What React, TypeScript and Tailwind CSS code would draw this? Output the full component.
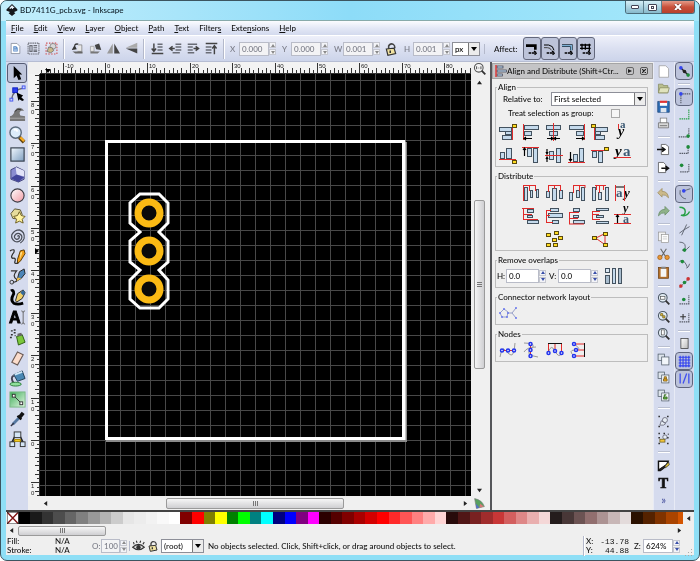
import React from "react";
import type { ReactNode } from "react";

/* ---------- shared pieces ---------- */

function Svg({ children, size = "size-[18px]" }: { children?: ReactNode; size?: string }) {
  return (
    <svg viewBox="0 0 18 18" className={`${size} shrink-0 overflow-visible`} fill="none" aria-hidden="true">
      {children}
    </svg>
  );
}

function Spin({ muted = false }: { muted?: boolean }) {
  const c = muted ? "#8a8a8a" : "#3a4fa8";
  return (
    <span className="flex w-[7px] shrink-0 flex-col gap-px" aria-hidden="true">
      <span className="flex h-[6px] items-center justify-center border border-[#c6c8d0] bg-[#f3f4f8]">
        <svg viewBox="0 0 4 3" className="h-[3px] w-1"><path d="M0 3L2 0L4 3Z" fill={c} /></svg>
      </span>
      <span className="flex h-[6px] items-center justify-center border border-[#c6c8d0] bg-[#f3f4f8]">
        <svg viewBox="0 0 4 3" className="h-[3px] w-1"><path d="M0 0L2 3L4 0Z" fill={c} /></svg>
      </span>
    </span>
  );
}

function Field({ label, value, muted = false, width }: { label: string; value: string; muted?: boolean; width: string }) {
  return (
    <label className={`flex shrink-0 items-center ${muted ? "text-[#7b7d88]" : "text-[#111]"}`}>
      <span className="w-[9px]">{label}</span>
      <input
        type="text"
        defaultValue={value}
        disabled={muted}
        className={`h-[14px] ${width} min-w-0 border border-[#b9bcc8] pl-[2px] ${muted ? "bg-[#f3f3f5]" : "bg-white"}`}
      />
      <Spin muted={muted} />
    </label>
  );
}

function Combo({ label, value, width }: { label: string; value: string; width: string }) {
  return (
    <span className={`flex h-[14px] ${width} shrink-0 border border-[#8d8f98] bg-white`}>
      <select aria-label={label} className="min-w-0 flex-1 appearance-none bg-white px-[2px]">
        <option>{value}</option>
      </select>
      <span className="flex w-[11px] items-center justify-center border-l border-[#777] bg-[#ececec]" aria-hidden="true">
        <svg viewBox="0 0 6 4" className="h-1 w-[6px]"><path d="M0 0H6L3 4Z" fill="#000" /></svg>
      </span>
    </span>
  );
}

function VSep() {
  return <span className="h-[20px] w-[2px] shrink-0 border-l border-[#b4b9cb] bg-white" />;
}

/* ---------- title and menu ---------- */

function TitleBar() {
  return (
    <header className="flex h-[20px] shrink-0 items-start bg-linear-to-r from-[#c3eefc] via-[#8ddcf8] to-[#a5e8fb] pl-[5px]">
      <svg viewBox="0 0 18 18" className="mt-[3px] size-[12px]" aria-hidden="true">
        <path d="M9 0L17 8Q18 10 15 11L12 12L14 14L9 18L4 14L6 12L1 10Q0 9 1 8Z" fill="#16181c" />
        <path d="M9 2L13 6L11 6L10 8L8 6L6 8L5 6Z" fill="#e8f2fa" />
      </svg>
      <h1 className="ml-[2px] pt-[3px] leading-[12px] text-[#10202a]">BD7411G_pcb.svg - Inkscape</h1>
      <div className="mr-[4px] ml-auto flex h-[13px] overflow-hidden rounded-b-[3px] border border-t-0 border-[#4b6c7a]">
        <button aria-label="Minimize" className="flex w-[18px] items-center justify-center border-r border-[#5e7f8d] bg-linear-to-b from-[#d5eef6] to-[#86b9cc]">
          <span className="h-[4px] w-[8px] rounded-[1px] border border-[#445] bg-white" />
        </button>
        <button aria-label="Maximize" className="flex w-[18px] items-center justify-center border-r border-[#5e7f8d] bg-linear-to-b from-[#d5eef6] to-[#86b9cc]">
          <span className="flex h-[7px] w-[9px] items-center justify-center rounded-[1px] border border-[#445] bg-white">
            <span className="h-[3px] w-[3px] border border-[#445]" />
          </span>
        </button>
        <button aria-label="Close" className="flex w-[32px] items-center justify-center bg-linear-to-b from-[#e49a88] via-[#c8503a] to-[#b8402c]">
          <svg viewBox="0 0 8 6" className="h-[6px] w-[8px]">
            <path d="M1 0L7 6M7 0L1 6" stroke="#5a2a22" strokeWidth="3" />
            <path d="M1 0L7 6M7 0L1 6" stroke="#fff" strokeWidth="2" />
          </svg>
        </button>
      </div>
    </header>
  );
}

const MENUS: [string, string, string][] = [
  ["", "F", "ile"], ["", "E", "dit"], ["", "V", "iew"], ["", "L", "ayer"], ["", "O", "bject"],
  ["", "P", "ath"], ["", "T", "ext"], ["Filter", "s", ""], ["Exte", "n", "sions"], ["", "H", "elp"],
];

function MenuBar() {
  return (
    <nav className="flex h-[15px] shrink-0 items-center gap-[10px] border-t border-[#8aa] bg-linear-to-b from-[#fbfcff] via-[#e4e8f6] to-[#d3daee] pl-[5px]">
      {MENUS.map(([a, u, b]) => (
        <button key={a + u + b} className="leading-[12px] text-[#111]">
          {a}<span className="underline">{u}</span>{b}
        </button>
      ))}
    </nav>
  );
}

/* ---------- tool controls ---------- */

const G = "#6a6d76";
const CONTROLS: Record<string, ReactNode> = {
  "Select all in layers": <><path d="M3 2H11L15 6V16H3Z" fill="#fff" stroke="#7b8290" /><path d="M6 6H10L12 8V13H6Z" fill="#4c82c4" /><path d="M7 8H10M7 10H11M7 12H11" stroke="#dce8f6" /></>,
  "Select all": <><rect x="1.500" y="1.500" width="15" height="15" stroke={G} strokeWidth="1.500" strokeDasharray="2 1" /><path d="M4 5H7V13H4ZM9 5H14M9 8H14M9 11H14M9 13H14" stroke={G} strokeWidth="1.500" /></>,
  "Deselect": <><rect x="1.500" y="1.500" width="15" height="15" stroke="#d05050" strokeWidth="1.500" strokeDasharray="2 2" /><circle cx="11" cy="6" r="4" fill="#d8d8d8" stroke="#777" /><path d="M3 13L5 7L10 8L12 12L8 15Z" fill="#c9b98a" stroke="#666" /></>,
  "Rotate left": <><path d="M10 4H15V13H9" stroke="#777" fill="#e8e8e8" /><path d="M1 11L5 4L8 10Z" fill="#333" /><path d="M2 13H16V16H6Z" fill="#666" /><path d="M10 3Q6 2 5 5" stroke="#333" strokeWidth="2" /></>,
  "Rotate right": <><path d="M2 6H7V13H2Z" stroke="#999" fill="#e8e8e8" /><path d="M8 4L14 2L17 11L10 10Z" fill="#444" /><path d="M2 13H15L12 16H2Z" fill="#777" /></>,
  "Flip horizontal": <><path d="M8 2V16H0Z" fill="#999" /><path d="M10 2V16H18Z" fill="#444" /></>,
  "Flip vertical": <><path d="M17 1V8H1Z" fill="#aaa" /><path d="M17 16V9H1Z" fill="#444" /></>,
  "Lower to bottom": <><path d="M4 2V12M1 9L4 13L7 9" stroke="#444" strokeWidth="2" /><path d="M9 3H16M9 7H16M9 11H16" stroke={G} strokeWidth="2" /><path d="M1 16H17" stroke="#444" strokeWidth="2" /></>,
  "Lower": <><path d="M1 9H8M5 6L1 9L5 12" stroke="#444" strokeWidth="2" /><path d="M9 3H17M9 7H17M9 11H17M5 15H15" stroke={G} strokeWidth="2" /></>,
  "Raise": <><path d="M1 3H14M1 7H8M1 11H8M1 15H10" stroke={G} strokeWidth="2" /><path d="M9 9H16M12 6L16 9L12 12" stroke="#444" strokeWidth="2" /></>,
  "Raise to top": <><path d="M1 2H17" stroke="#444" strokeWidth="2" /><path d="M1 7H9M1 11H9M1 15H9" stroke={G} strokeWidth="2" /><path d="M13 17V6M10 9L13 5L16 9" stroke="#444" strokeWidth="2" /></>,
};

function Controls({ names }: { names: string[] }) {
  return (
    <div className="flex">
      {names.map((n) => (
        <button key={n} aria-label={n} className="flex h-[20px] w-[18px] items-center justify-center">
          <Svg size="size-[13px]">{CONTROLS[n]}</Svg>
        </button>
      ))}
    </div>
  );
}

function Padlock({ size = "size-[14px]" }: { size?: string }) {
  return (
    <Svg size={size}>
      <path d="M6 9V5Q8 1 12 3Q14 4 14 8" stroke="#444" strokeWidth="2" />
      <path d="M3 9L13 8L15 15L5 17Z" fill="#f0e2a0" stroke="#333" strokeWidth="1.500" />
      <path d="M8 11V14" stroke="#333" strokeWidth="2" />
    </Svg>
  );
}

const AFFECT: [string, ReactNode][] = [
  ["Scale stroke width", <path key="a" d="M0 4H14V10" stroke="#000" strokeWidth="4" />],
  ["Scale rounded corners", <g key="b"><path d="M0 3H7Q14 4 15 11" stroke="#000" strokeWidth="1.500" /><path d="M0 7H5Q10 7 11 11" stroke="#444" strokeWidth="1.500" /></g>],
  ["Move gradients", <g key="c"><path d="M0 4H14V11" stroke="#1c2c3a" strokeWidth="4" /><path d="M0 4H14V11" stroke="#7db0d4" strokeWidth="2" /></g>],
  ["Move patterns", <path key="d" d="M0 3H16M0 8H16M3 1V10M8 1V10M14 1V12" stroke="#000" strokeWidth="2" />],
];

function ToolControls() {
  return (
    <div className="flex h-[27px] shrink-0 items-center overflow-hidden border-y border-t-white border-b-[#b6bdd3] bg-linear-to-b from-[#eef0fa] via-[#dbe0f1] to-[#ccd4ea]">
      <Controls names={["Select all in layers", "Select all", "Deselect"]} />
      <span className="flex w-[8px] justify-center"><VSep /></span>
      <Controls names={["Rotate left", "Rotate right", "Flip horizontal", "Flip vertical"]} />
      <span className="flex w-[8px] justify-center"><VSep /></span>
      <Controls names={["Lower to bottom", "Lower", "Raise", "Raise to top"]} />
      <span className="mr-[2px] flex w-[8px] justify-center"><VSep /></span>
      <div className="flex gap-[6px]">
        <Field label="X" value="0.000" muted width="w-[30px]" />
        <Field label="Y" value="0.000" muted width="w-[30px]" />
        <Field label="W" value="0.001" muted width="w-[30px]" />
      </div>
      <button aria-label="Lock ratio" className="mr-[6px] ml-[4px]"><Padlock /></button>
      <Field label="H" value="0.001" muted width="w-[30px]" />
      <span className="w-[2px]" />
      <Combo label="Unit" value="px" width="w-[28px]" />
      <span className="mr-[9px] ml-[4px]"><VSep /></span>
      <span className="w-[29px] text-[#111]">Affect:</span>
      {AFFECT.map(([n, art]) => (
        <button key={n} aria-label={n} aria-pressed="true" className="flex h-[23px] w-[18px] items-center justify-center rounded-[3px] border border-[#63687c] bg-[#bcc3d9]">
          <Svg size="size-[12px]">{art}<path d="M4 15H14M12 12L16 15L12 18" stroke="#000" strokeWidth="2" strokeDasharray="4 1" /></Svg>
        </button>
      ))}
    </div>
  );
}

/* ---------- toolbox ---------- */

const TOOLS: [string, ReactNode][] = [
  ["Select", <path key="i" d="M5 1V14L8 11L10 16L13 15L11 10H14Z" fill="#000" />],
  ["Edit nodes", <g key="i"><path d="M3 16Q3 5 16 3" stroke="#667" strokeWidth="1.500" /><rect x="4" y="3" width="5" height="5" fill="#2a3cf0" stroke="#1020c0" /><rect x="14" y="1" width="3" height="3" fill="#cdd4ff" stroke="#4455ee" /><rect x="1" y="14" width="3" height="3" fill="#cdd4ff" stroke="#4455ee" /><path d="M8 8L15 11L13 13L16 16L14 17L11 15L10 17Z" fill="#000" /></g>],
  ["Tweak", <g key="i"><path d="M1 12Q5 11 6 6Q9 1 14 4L16 6L13 6Q10 7 12 11L17 12V17H1Z" fill="#777" /><path d="M1 14H17" stroke="#aaa" /><path d="M6 7Q9 3 13 5" stroke="#333" /></g>],
  ["Zoom", <g key="i"><circle cx="7" cy="7" r="6" fill="#dcecfa" stroke="#5b6b7b" strokeWidth="1.500" /><path d="M5 4Q8 3 9 6" stroke="#fff" strokeWidth="2" /><path d="M11 12L16 17" stroke="#5a4010" strokeWidth="4" /><path d="M12 12L16 16" stroke="#f2a822" strokeWidth="2.500" /></g>],
  ["Rectangle", <rect key="i" x="2" y="2" width="14" height="14" fill="url(#steel)" stroke="#333d4a" strokeWidth="1.200" />],
  ["3D box", <g key="i"><path d="M2 4L8 1L16 5V14L10 17L2 14Z" fill="#8a8cd0" stroke="#44467c" /><path d="M7 1L16 5V11L8 9Z" fill="#e2e3f8" /><path d="M2 13L8 9L16 12L10 17Z" fill="#42449a" /></g>],
  ["Ellipse", <circle key="i" cx="9" cy="9" r="7" fill="url(#rose)" stroke="#3c3c44" strokeWidth="1.200" />],
  ["Star", <g key="i"><path d="M2 7L6 2L12 3L14 8L10 13L4 12Z" fill="#e6dc9c" stroke="#5a5434" /><path d="M11 5L13 9L17 10L14 13L15 17L11 15L7 17L8 13L5 10L9 9Z" fill="#fff2a0" stroke="#6a5c20" /></g>],
  ["Spiral", <path key="i" d="M9 9Q10 7 11 9Q11 12 8 12Q5 11 6 8Q8 5 11 6Q15 8 13 12Q10 16 6 14Q2 11 3 7Q6 2 11 2Q17 4 16 11Q15 14 12 16" stroke="#4a4e58" strokeWidth="1.300" />],
  ["Pencil", <g key="i"><path d="M1 3Q7 0 5 5Q1 10 4 11Q8 10 6 15Q6 17 10 16" stroke="#333" strokeWidth="1.300" /><path d="M9 12L12 3L16 2L17 6L12 14L9 16Z" fill="#f2a018" stroke="#553805" /><path d="M12 5L14 4L12 12" fill="#ffe9a0" /></g>],
  ["Bezier", <g key="i"><path d="M2 3H8Q3 9 8 12Q9 15 4 15" stroke="#333" strokeWidth="1.300" /><circle cx="3" cy="15" r="2" stroke="#333" /><path d="M9 11L11 4L16 1L17 6L13 11L8 14Z" fill="#4d86b8" stroke="#222" /><path d="M9 10L13 11L8 14Z" fill="#f2c04a" /></g>],
  ["Calligraphy", <g key="i"><path d="M2 2Q5 0 5 5Q1 12 5 15Q9 17 15 15" stroke="#000" strokeWidth="3" /><path d="M7 12L9 5L15 1L17 4L14 10L8 14Z" fill="#f2d06a" stroke="#222" /><path d="M12 4L15 1L17 4L15 7Z" fill="#356a9c" /></g>],
  ["Text", <g key="i"><text x="0" y="15" fontSize="17" fontWeight="900" fontFamily="'Liberation Sans', sans-serif" fill="#000" stroke="#000">A</text><path d="M13 2Q15 2 15 4V14Q15 16 13 16M17 2Q15 2 15 4M17 16Q15 16 15 14" stroke="#666" /></g>],
  ["Spray", <g key="i"><path d="M8 8L14 6L17 14L10 17Z" fill="#7cc83c" stroke="#2c5c10" /><path d="M9 5L13 4L14 7L9 8Z" fill="#666" /><path d="M2 2H4M5 4H7M2 6H4M5 1H7M6 7H7M1 9H3" stroke="#333" strokeWidth="1.500" /></g>],
  ["Eraser", <path key="i" d="M9 2L15 5L9 16L3 13Z" fill="#fbdccb" stroke="#6a5a54" strokeWidth="1.200" />],
  ["Paint bucket", <g key="i"><path d="M5 5L14 1L17 9L9 12Z" fill="#4a88b4" stroke="#1f3a50" /><path d="M6 5L14 2" stroke="#cfe6f6" strokeWidth="2" /><path d="M5 6Q1 8 5 14" stroke="#445" strokeWidth="2" /><ellipse cx="7" cy="15" rx="6" ry="2" fill="#8fe09a" stroke="#2b7a3a" /></g>],
  ["Gradient", <g key="i"><rect x="1" y="1" width="16" height="16" fill="url(#leaf)" stroke="#79b885" /><path d="M5 5L13 13" stroke="#333" /><rect x="3.500" y="3.500" width="3" height="3" fill="#fff" stroke="#333" /><rect x="11.500" y="11.500" width="3" height="3" fill="#fff" stroke="#333" /></g>],
  ["Dropper", <g key="i"><path d="M4 14L11 7" stroke="#5577a0" strokeWidth="3" /><path d="M2 16L5 13" stroke="#334" strokeWidth="1.500" /><path d="M9 5L13 9" stroke="#111" strokeWidth="2.500" /><path d="M11 7L15 2" stroke="#111" strokeWidth="4" /></g>],
  ["Connector", <g key="i"><path d="M6 6L3 12M12 6L15 12M6 10L4 13M12 10L14 13" stroke="#222" strokeWidth="1.500" /><rect x="5.500" y="1" width="7" height="6" fill="#d5e6f6" stroke="#333" /><rect x="1" y="11.500" width="5" height="5" fill="#d5e6f6" stroke="#333" /><rect x="12" y="11.500" width="5" height="5" fill="#d5e6f6" stroke="#333" /><rect x="6" y="9" width="6" height="2" fill="#ffd428" stroke="#a80" /></g>],
];

function Toolbox() {
  return (
    <aside aria-label="Toolbox" className="w-[22px] shrink-0 bg-[#d5dbee] pt-px">
      <div className="flex h-[387px] flex-col items-center justify-between">
        {TOOLS.map(([n, art]) => (
          <button
            key={n}
            aria-label={n}
            className={`flex h-[20px] w-[20px] shrink-0 items-center justify-center ${n === "Select" ? "rounded-[3px] border border-[#565c74] bg-[#bfc6dc]" : ""}`}
          >
            <Svg size="size-[17px]">{art}</Svg>
          </button>
        ))}
      </div>
    </aside>
  );
}

/* ---------- canvas ---------- */

const STEP = 42.4;
const RULER_FONT = "'Liberation Sans', sans-serif";

function TopRuler() {
  const ticks = Array.from({ length: 102 }, (_, i) => i - 15);
  return (
    <svg className="h-[12px] w-full min-w-0 bg-[#f3f3f3]" role="img" aria-label="Horizontal ruler">
      <rect x="0" y="11" width="100%" height="1" fill="#333" />
      {ticks.map((t) => {
        const x = Math.round(65 + (t * STEP) / 10);
        const major = t % 10 === 0;
        return <rect key={t} x={x} y={major ? 1 : t % 2 === 0 ? 6 : 8} width="1" height={major ? 11 : 6} fill="#333" />;
      })}
      {Array.from({ length: 10 }, (_, i) => i - 1).map((n) => (
        <text key={n} x={Math.round(65 + n * STEP) + 2} y="6" fontSize="6" fontFamily={RULER_FONT} fill="#222">{n * 10}</text>
      ))}
      <path d="M5 7H11L8 11Z" fill="#000" />
    </svg>
  );
}

function SideRuler() {
  const ticks = Array.from({ length: 101 }, (_, i) => i - 13);
  return (
    <svg className="h-full w-[12px] bg-[#f3f3f3]" role="img" aria-label="Vertical ruler">
      <rect x="11" y="0" width="1" height="100%" fill="#333" />
      {ticks.map((t) => {
        const y = Math.round(366 - (t * STEP) / 10);
        const major = t % 10 === 0;
        return <rect key={t} x={major ? 3 : t % 2 === 0 ? 7 : 9} y={y} width={major ? 9 : 5} height="1" fill="#333" />;
      })}
      {Array.from({ length: 10 }, (_, i) => i - 1).map((n) => {
        const y = Math.round(366 - n * STEP);
        const s = String(Math.abs(n * 10));
        return s.split("").map((ch, i) => (
          <text key={`${n}-${i}`} x="3" y={y + 6 + i * 7} fontSize="6" fontFamily={RULER_FONT} fill="#222">{ch}</text>
        ));
      })}
      <path d="M7 174L11 177L7 180Z" fill="#000" />
    </svg>
  );
}

const OUTLINE =
  "M140 194H159L168 203V223L159 232L168 241V262L159 270L168 280V299L159 308H140L130 299V280L140 270L130 262V241L140 232L130 223V203Z";

function Drawing() {
  return (
    <div className="relative min-h-0 min-w-0 overflow-hidden bg-black">
      <svg className="absolute inset-0 h-full w-full" role="img" aria-label="Circuit board drawing">
        <defs>
          <pattern id="grid" width="15" height="15" x="5" y="6" patternUnits="userSpaceOnUse">
            <path d="M0 0H15V1H1V15H0Z" fill="#484848" />
          </pattern>
        </defs>
        <g transform="translate(-40 -74)">
          <path d="M406 142V441H106" stroke="#8a8a8a" strokeWidth="2" fill="none" />
          <rect x="106.500" y="141.500" width="297" height="297" fill="none" stroke="#fff" strokeWidth="3" />
          <path d="M404 140V440" stroke="#fff" strokeWidth="3" />
        </g>
        <rect width="100%" height="100%" fill="url(#grid)" className="mix-blend-lighten" />
        <g transform="translate(-40 -74)">
          <path d={OUTLINE} fill="none" stroke="#fff" strokeWidth="3" />
          {[213, 251, 289].map((y) => (
            <circle key={y} cx="149" cy={y} r="11" fill="#0a0a0a" stroke="#fbba14" strokeWidth="7" />
          ))}
        </g>
      </svg>
    </div>
  );
}

function Arrow({ d }: { d: string }) {
  return <svg viewBox="0 0 6 6" className="size-[5px] shrink-0" aria-hidden="true"><path d={d} fill="#222" /></svg>;
}

function Grip({ vertical = false }: { vertical?: boolean }) {
  return vertical ? (
    <span className="flex flex-col gap-px">
      <i className="h-px w-[5px] bg-[#777]" /><i className="h-px w-[5px] bg-[#777]" /><i className="h-px w-[5px] bg-[#777]" />
    </span>
  ) : (
    <span className="flex gap-px">
      <i className="h-[5px] w-px bg-[#777]" /><i className="h-[5px] w-px bg-[#777]" /><i className="h-[5px] w-px bg-[#777]" />
    </span>
  );
}

function CanvasArea() {
  return (
    <main className="grid min-w-0 flex-1 grid-cols-[12px_minmax(0,1fr)_19px] grid-rows-[12px_minmax(0,1fr)_14px] bg-[#f0f0f0]">
      <span />
      <TopRuler />
      <button aria-label="Zoom drawing" className="flex items-start pl-[2px]">
        <Svg size="size-[13px]">
          <circle cx="8" cy="8" r="6" fill="#f4f4f4" stroke="#555" strokeWidth="1.500" />
          <path d="M5 6V10M8 7V7.500M8 9V9.500M11 6V10" stroke="#333" strokeWidth="1.200" />
          <path d="M12 12L17 17" stroke="#333" strokeWidth="2.500" />
        </Svg>
      </button>
      <SideRuler />
      <Drawing />
      <div className="flex flex-col items-center pt-[6px] pr-[3px] pb-[3px]">
        <Arrow d="M0 5L3 1L6 5Z" />
        <div className="mt-[3px] flex w-[11px] min-h-0 flex-1 flex-col">
          <span className="flex-[113]" />
          <span className="flex flex-[167] items-center justify-center rounded-[2px] border border-[#9a9a9a] bg-linear-to-r from-[#f6f6f6] to-[#cfcfd2]">
            <Grip vertical />
          </span>
          <span className="flex-[120]" />
        </div>
        <Arrow d="M0 1L3 5L6 1Z" />
      </div>
      <span />
      <div className="flex items-center px-[3px]">
        <Arrow d="M5 0L1 3L5 6Z" />
        <div className="flex h-[11px] min-w-0 flex-1">
          <span className="flex-[119]" />
          <span className="flex flex-[176] items-center justify-center rounded-[2px] border border-[#9a9a9a] bg-linear-to-b from-[#f6f6f6] to-[#cfcfd2]">
            <Grip />
          </span>
          <span className="flex-[120]" />
        </div>
        <Arrow d="M1 0L5 3L1 6Z" />
      </div>
      <button aria-label="Colour management" className="flex items-center pl-[3px]">
        <Svg size="size-[11px]">
          <path d="M1 1Q13 3 17 14L4 17Z" fill="#58a060" stroke="#777" /><path d="M3 9L9 16L4 17Z" fill="#5470c8" /><path d="M10 9L16 14L9 16Z" fill="#d87878" />
        </Svg>
      </button>
    </main>
  );
}

/* ---------- align and distribute panel ---------- */

type Art = { name: string; bars?: number[][]; red?: string; ink?: string; dots?: number[][]; glyphs?: [string, number, number, number][] };

function Glyph({ a }: { a: Art }) {
  return (
    <Svg>
      {a.bars?.map((b) => <rect key={b.join()} x={b[0]} y={b[1]} width={b[2]} height={b[3]} fill="#c5daec" stroke="#43525f" />)}
      {a.glyphs?.map(([t, x, y, s]) => (
        <text key={t} x={x} y={y} fontSize={s} fontStyle={t === "y" ? "italic" : "normal"} fontWeight="700" fontFamily="'Liberation Serif', serif" fill={t === "y" ? "#000" : "#3d5a74"}>{t}</text>
      ))}
      {a.red && <path d={a.red} stroke="#e02a2a" />}
      {a.ink && <path d={a.ink} stroke="#000" strokeWidth="1.200" />}
      {a.dots?.map((b) => <rect key={b.join()} x={b[0]} y={b[1]} width="4" height="3" fill="#ffdc20" stroke="#5a4a10" />)}
    </Svg>
  );
}

const ALIGN: Art[] = [
  { name: "Align right edges to anchor left", bars: [[0.5, 4.5, 12, 4], [6.5, 8.5, 6, 3], [3.5, 12.5, 9, 4]], red: "M13.500 3V17", dots: [[13.5, 1.5]] },
  { name: "Align left edges", bars: [[2.5, 2.5, 14, 4], [2.5, 8.5, 7, 4]], red: "M1.500 1V17", ink: "M2 15.500H10M4 14L2 15.500L4 17" },
  { name: "Center on vertical axis", bars: [[1.5, 2.5, 14, 4], [4.5, 8.5, 8, 4]], red: "M8.500 0V18", ink: "M2 15.500H15M6 14L8 15.500L6 17M11 14L9 15.500L11 17" },
  { name: "Align right sides", bars: [[1.5, 2.5, 14, 4], [8.5, 8.5, 7, 4]], red: "M16.500 1V17", ink: "M8 15.500H16M14 14L16 15.500L14 17" },
  { name: "Align left edges to anchor right", bars: [[4.5, 4.5, 12, 4], [4.5, 8.5, 5, 3], [4.5, 12.5, 9, 4]], red: "M3.500 3V17", dots: [[0.5, 1.5]] },
  { name: "Baseline anchor horizontal", glyphs: [["a", 6, 5, 11], ["y", 4, 13, 14]], red: "M4.500 1V6" },
  { name: "Align bottom to anchor top", bars: [[1.5, 6.5, 4, 6], [7.5, 2.5, 5, 10]], red: "M0 13.500H17", dots: [[13.5, 14.5]] },
  { name: "Align top edges", bars: [[5.5, 2.5, 4, 8], [11.5, 2.5, 4, 14]], red: "M0 1.500H17", ink: "M2.500 2V10M1 4L2.500 2L4 4" },
  { name: "Center on horizontal axis", bars: [[4.5, 5.5, 4, 8], [11.5, 2.5, 4, 14]], red: "M0 9.500H18", ink: "M2 3V8M1 6L2 8L3 6M2 16V11M1 13L2 11L3 13" },
  { name: "Align bottom edges", bars: [[5.5, 8.5, 4, 7], [11.5, 2.5, 4, 13]], red: "M0 16.500H17", ink: "M2.500 6V15M1 13L2.500 15L4 13" },
  { name: "Align top to anchor bottom", bars: [[1.5, 5.5, 4, 6], [7.5, 5.5, 4, 11]], red: "M0 4.500H14", dots: [[13.5, 1.5]] },
  { name: "Baseline anchor vertical", glyphs: [["y", 1, 10, 15], ["a", 9, 10, 15]], red: "M0 11.500H17" },
];

const DISTRIBUTE: (Art | null)[] = [
  null,
  { name: "Distribute left edges", bars: [[2.5, 3.5, 3, 13], [8.5, 6.5, 2, 7], [14.5, 5.5, 2, 8]], red: "M1.500 1V17M7.500 1V7M13.500 1V7M1 1.500H14" },
  { name: "Distribute centers horizontally", bars: [[1.5, 7.5, 3, 6], [7.5, 4.5, 4, 12], [14.5, 6.5, 3, 8]], red: "M3.500 1V8M9.500 1V5M15.500 1V7M3 1.500H16" },
  { name: "Distribute right edges", bars: [[1.5, 8.5, 3, 8], [8.5, 6.5, 3, 7], [13.5, 3.5, 3, 13]], red: "M5.500 1V9M11.500 1V7M17 1V4M5 1.500H17" },
  { name: "Make horizontal gaps equal", bars: [[1.5, 3.5, 3, 13], [7.5, 8.5, 3, 7], [14.5, 3.5, 3, 13]], red: "M5.500 1V6M8.500 1V9M12.500 1V6M4 1.500H15" },
  { name: "Distribute baselines horizontally", glyphs: [["a", 2, 13, 13], ["y", 10, 13, 13]], red: "M1.500 1V17M10.500 1V17", ink: "M2 3H10" },
  null,
  { name: "Distribute top edges", bars: [[5.5, 2.5, 6, 3], [5.5, 8.5, 5, 2], [5.5, 13.5, 11, 3]], red: "M0 1.500H12M1 7.500H10M1 12.500H16M1.500 1V13" },
  { name: "Distribute centers vertically", bars: [[5.5, 1.5, 8, 3], [3.5, 6.5, 14, 4], [7.5, 13.5, 6, 3]], red: "M1 3.500H6M1 8.500H5M1 15.500H8M1.500 3V15" },
  { name: "Distribute bottom edges", bars: [[5.5, 1.5, 6, 3], [5.5, 8.5, 5, 2], [5.5, 13.5, 11, 3]], red: "M1 5.500H11M1 11.500H10M1 17H16M1.500 5V17" },
  { name: "Make vertical gaps equal", bars: [[5.5, 1.5, 12, 2], [5.5, 8.5, 7, 2], [5.5, 14.5, 12, 2]], red: "M1 4.500H9M1 7.500H8M1 12.500H9M1.500 4V13" },
  { name: "Distribute baselines vertically", glyphs: [["y", 9, 5, 12], ["a", 9, 16, 12]], red: "M0 7.500H17M0 16.500H17", ink: "M3.500 8V16M2 10L3.500 8L5 10" },
  null,
  null,
  { name: "Randomize centers", dots: [[1.5, 3.5], [9.5, 1.5], [13.5, 6.5], [7.5, 8.5], [1.5, 13.5], [8.5, 13.5]] },
  null,
  { name: "Unclump objects", dots: [[1.5, 6.5], [12.5, 2.5], [12.5, 13.5]], red: "M5 8L13 4M14 5V14M6 9L13 14" },
  null,
];

function Group({ title, children }: { title: string; children: ReactNode }) {
  return (
    <fieldset className="min-w-0 border border-[#bdbdbd]">
      <legend className="ml-[1px] px-px leading-[10px]">{title}</legend>
      {children}
    </fieldset>
  );
}

function ArtGrid({ items }: { items: (Art | null)[] }) {
  return (
    <div className="grid w-[138px] grid-cols-6">
      {items.map((a, i) =>
        a ? (
          <button key={a.name} aria-label={a.name} className="flex h-[23px] items-center justify-center"><Glyph a={a} /></button>
        ) : (
          <span key={i} />
        ),
      )}
    </div>
  );
}

const ND = (x: number, y: number) => <circle key={`${x},${y}`} cx={x} cy={y} r="1.500" fill="#fff" stroke="#2233ee" strokeWidth="1.500" />;
const NODES: [string, ReactNode][] = [
  ["Align nodes horizontally", <g key="i"><path d="M1 16Q3 5 6 9T12 14T16 2" stroke="#999" /><path d="M2 9.500H16" stroke="#e02a2a" />{[ND(3, 9.5), ND(9, 9.5), ND(15, 9.5)]}</g>],
  ["Align nodes vertically", <g key="i"><path d="M2 2Q16 2 9 8T16 16M2 11Q5 6 14 6" stroke="#999" /><path d="M8.500 2V17" stroke="#e02a2a" />{[ND(8.5, 3), ND(8.5, 9), ND(8.5, 15)]}</g>],
  ["Distribute nodes horizontally", <g key="i"><path d="M2 12Q5 2 9 10T16 12" stroke="#999" /><path d="M2.500 3V12M9 3V10M15.500 3V12" stroke="#e02a2a" /><path d="M2 2.500H16" stroke="#111" />{[ND(2.5, 12), ND(9, 10), ND(15.5, 12)]}</g>],
  ["Distribute nodes vertically", <g key="i"><path d="M5 3Q14 9 6 9T6 16" stroke="#999" /><path d="M5 3H15M8 9H15M5 15H15" stroke="#e02a2a" /><path d="M15.500 2V16" stroke="#111" />{[ND(5, 3), ND(7, 9), ND(5, 15)]}</g>],
];

function AlignPanel() {
  return (
    <section aria-label="Align and Distribute" className="w-[163px] shrink-0 border-l-2 border-[#55565a] bg-[#efefef] text-[#111]">
      <header className="mt-px flex h-[16px] items-center border border-[#a5a5a5] bg-[#c4c4c6] pl-[2px]">
        <Svg size="size-[12px]">
          <rect x="3" y="1.500" width="9" height="3" fill="#bcd6ec" stroke="#334" /><rect x="3" y="7.500" width="14" height="3" fill="#bcd6ec" stroke="#334" /><rect x="3" y="13.500" width="8" height="3" fill="#bcd6ec" stroke="#334" /><path d="M1.500 0V18" stroke="#e02a2a" strokeWidth="2" />
        </Svg>
        <h2 className="min-w-0 flex-1 whitespace-nowrap">Align and Distribute (Shift+Ctr...</h2>
        <button aria-label="Iconify dialog" className="mr-[6px] flex size-[8px] items-center justify-center rounded-[2px] border border-[#666]">
          <svg viewBox="0 0 4 4" className="size-1"><path d="M0 0L4 2L0 4Z" fill="#222" /></svg>
        </button>
        <button aria-label="Close dialog" className="mr-[4px] flex size-[8px] items-center justify-center rounded-[2px] border border-[#555]">
          <svg viewBox="0 0 4 4" className="size-1"><path d="M0 0L4 4M4 0L0 4" stroke="#222" strokeWidth="1.200" /></svg>
        </button>
      </header>
      <div className="flex flex-col gap-[4px] pt-[3px] pr-[5px] pl-[3px]">
        <Group title="Align">
          <div className="flex h-[14px] items-center pr-px pl-[7px]">
            <span className="flex-1">Relative to:</span>
            <Combo label="Relative to" value="First selected" width="w-[95px]" />
          </div>
          <label className="flex h-[14px] items-center pl-[12px]">
            <span className="w-[103px]">Treat selection as group:</span>
            <input type="checkbox" className="size-[9px] appearance-none border border-[#a9a9a9] bg-[#f6f6f6]" />
          </label>
          <ArtGrid items={ALIGN} />
        </Group>
        <Group title="Distribute">
          <ArtGrid items={DISTRIBUTE} />
        </Group>
        <Group title="Remove overlaps">
          <div className="flex h-[22px] items-center gap-[3px] pl-px">
            <Field label="H:" value="0.0" width="w-[33px]" />
            <Field label="V:" value="0.0" width="w-[33px]" />
            <button aria-label="Remove overlaps" className="ml-[3px]">
              <Svg>
                <rect x="1.500" y="1.500" width="4" height="4" fill="#dce8f2" stroke="#43525f" /><rect x="1.500" y="8.500" width="4" height="8" fill="#a8bccd" stroke="#43525f" /><rect x="8.500" y="1.500" width="3" height="15" fill="#c5daec" stroke="#43525f" /><rect x="14.500" y="1.500" width="3" height="15" fill="#a8bccd" stroke="#43525f" />
              </Svg>
            </button>
          </div>
        </Group>
        <Group title="Connector network layout">
          <div className="flex h-[22px] items-center pl-[3px]">
            <button aria-label="Arrange connector network">
              <Svg><path d="M1 9L5 5L9 8L8 13L3 13ZM9 9L13 9L17 4M13 9L17 14" stroke="#98a0c8" /><path d="M1 8V10M5 4V6M9 8V10M8 12V14M3 12V14M17 3V5M17 13V15" stroke="#6a78f0" strokeWidth="1.500" /></Svg>
            </button>
          </div>
        </Group>
        <Group title="Nodes">
          <div className="grid h-[22px] w-[94px] grid-cols-4 items-center">
            {NODES.map(([n, art]) => (
              <button key={n} aria-label={n} className="flex justify-center"><Svg>{art}</Svg></button>
            ))}
          </div>
        </Group>
      </div>
    </section>
  );
}

/* ---------- command and snap bars ---------- */

const lens = (inner: ReactNode) => (
  <g><circle cx="8" cy="8" r="6" fill="#e4eef6" stroke="#4c5864" strokeWidth="1.500" /><path d="M12 12L17 17" stroke="#333" strokeWidth="2.500" />{inner}</g>
);
const clones = (inner: ReactNode) => (
  <g><rect x="1.500" y="1.500" width="9" height="9" fill="#dde4ec" stroke="#4c5864" /><rect x="6.500" y="5.500" width="10" height="11" fill="#f2f6fa" stroke="#4c5864" />{inner}</g>
);

type BarItem = [string, ReactNode] | null;

const COMMANDS: BarItem[] = [
  ["New", <path key="i" d="M3 1H12L16 5V17H3Z" fill="#fff" stroke="#999" />],
  ["Open", <g key="i"><path d="M2 3H8L9 5H15V15H2Z" fill="#b9bf8e" stroke="#83875c" /><path d="M4 8H17L15 15H2Z" fill="#e0e3bd" stroke="#83875c" /></g>],
  ["Save", <g key="i"><path d="M1 2H17V17H1Z" fill="#2c6cb4" stroke="#1b4478" /><rect x="4" y="1" width="10" height="7" fill="#fff" /><rect x="4" y="1" width="10" height="3" fill="#e03434" /><rect x="5" y="11" width="8" height="6" fill="#dfe6ee" /></g>],
  ["Print", <g key="i"><rect x="4.500" y="1.500" width="9" height="7" fill="#fff" stroke="#777" /><path d="M2 8H16V15H2Z" fill="#d8d8d8" stroke="#666" /><path d="M4 12H14" stroke="#555" /></g>],
  null,
  ["Import", <g key="i"><path d="M6 2H12L16 5V16H6Z" fill="#fff" stroke="#444" /><path d="M0 9H10M7 6L11 9L7 12" stroke="#111" strokeWidth="2" /></g>],
  ["Export", <g key="i"><path d="M2 2H9L12 5V16H2Z" fill="#fff" stroke="#444" /><path d="M6 10H15M12 7L16 10L12 13" stroke="#111" strokeWidth="2" /></g>],
  null,
  ["Undo", <path key="i" d="M1 8L7 2V6Q15 6 16 15Q12 10 7 11V14Z" fill="#cbb98a" stroke="#9c8b5c" />],
  ["Redo", <path key="i" d="M17 8L11 2V6Q3 6 2 15Q6 10 11 11V14Z" fill="#8fb28a" stroke="#658a62" />],
  null,
  ["Copy", <g key="i"><rect x="2" y="1.500" width="10" height="12" fill="#f4f4f4" stroke="#999" /><rect x="6" y="5" width="10" height="11" fill="#fff" stroke="#999" /><path d="M8 8H14M8 11H14" stroke="#bbb" /></g>],
  ["Cut", <g key="i"><path d="M5 1L12 12M13 1L6 12" stroke="#666" strokeWidth="1.500" /><circle cx="4" cy="13" r="3" fill="#e89838" stroke="#a05a10" /><circle cx="14" cy="13" r="3" fill="#e89838" stroke="#a05a10" /></g>],
  ["Paste", <g key="i"><rect x="2" y="2" width="14" height="15" fill="#b5702a" stroke="#6c3e10" /><rect x="5" y="4" width="8" height="11" fill="#f6f6f6" /><rect x="6" y="1" width="6" height="3" fill="#888" /></g>],
  null,
  ["Zoom selection", lens(<rect x="5" y="6" width="6" height="4" fill="#fff" stroke="#555" />)],
  ["Zoom drawing", lens(<path d="M5 5H8V8H5ZM8 8H11V11H8Z" fill="#f2c53a" stroke="#665a20" />)],
  ["Zoom page", lens(<rect x="6" y="4" width="4" height="7" fill="#fff" stroke="#555" />)],
  null,
  ["Duplicate", clones(null)],
  ["Clone", clones(<path d="M9 11H14V14H9ZM10 11V8H13V11" fill="#f2b020" stroke="#6a4c10" />)],
  ["Unlink clone", clones(<path d="M9 11H14V14H9ZM10 11V8H13" fill="#5fae3c" stroke="#2a5a18" />)],
  null,
  ["Group", <g key="i"><path d="M2 2H4M14 2H16M2 16H4M14 16H16" stroke="#222" strokeWidth="2" /><circle cx="11" cy="7" r="3.500" fill="#e6edf4" stroke="#556" /><path d="M4 14L6 8L12 12L9 14Z" fill="#e6edf4" stroke="#556" /></g>],
  ["Ungroup", <g key="i"><path d="M2 2H4M9 2H11M2 8H4M14 8H16M2 16H4M14 16H16M15 3H16" stroke="#222" strokeWidth="2" /><circle cx="11" cy="7" r="3" fill="#e6edf4" stroke="#556" /><rect x="4" y="10" width="7" height="4" fill="#f2c53a" stroke="#665a20" /></g>],
  null,
  ["Fill and Stroke", <g key="i"><path d="M1 2H17L14 10L5 17H1Z" fill="#111" /><path d="M3 4H14L12 8L3 14Z" fill="#fff" /><path d="M3 14L13 7L12 11L5 16Z" fill="#222" /><path d="M11 10L16 4L17 8L12 12Z" fill="#e6c83a" stroke="#333" /></g>],
  ["Text and Font", <text key="i" x="2" y="16" fontSize="20" fontWeight="700" fontFamily="'Liberation Serif', serif" fill="#111" stroke="#111">T</text>],
];

const dash = (d: string, c = "#555a66") => <path d={d} stroke={c} strokeWidth="1.500" strokeDasharray="2 1" />;
const pt = (x: number, y: number, c = "#1d8a3a") => <circle cx={x} cy={y} r="2.500" fill={c} />;

const SNAPS: BarItem[] = [
  ["Enable snapping", <g key="i"><path d="M4 4L14 14" stroke="#222" strokeWidth="2" />{pt(4, 4, "#3344ee")}{pt(9, 9, "#222")}{pt(14, 14)}</g>],
  null,
  ["Snap bounding box", <g key="i">{dash("M4 17V4H17")}{pt(4, 4, "#3344ee")}</g>],
  ["Snap box edges", <g key="i">{dash("M2 15H15V2", "#28a048")}</g>],
  ["Snap box corners", <g key="i">{dash("M1 15H15V2")}{pt(14, 14)}</g>],
  ["Snap edge midpoints", <g key="i">{dash("M2 13H14V4")}{pt(14, 4)}</g>],
  ["Snap box centers", <g key="i">{dash("M3 15H15V3")}{pt(5, 6)}</g>],
  null,
  ["Snap nodes", <g key="i"><path d="M3 3Q1 9 6 13Q9 15 11 15M8 4Q11 3 17 1" stroke="#555a66" strokeWidth="1.200" />{pt(8, 4, "#3344ee")}</g>],
  ["Snap paths", <path key="i" d="M2 3Q10 3 10 9T4 14Q12 17 16 9" stroke="#28a048" strokeWidth="2" />],
  ["Snap intersections", <path key="i" d="M2 14Q8 9 16 5M5 17L12 2" stroke="#555a66" strokeWidth="1.200" />],
  ["Snap cusp nodes", <g key="i"><path d="M2 3Q10 3 10 9T6 14Q12 15 16 9" stroke="#555a66" strokeWidth="1.200" />{pt(9, 14)}</g>],
  ["Snap smooth nodes", <g key="i"><path d="M2 5Q6 1 10 7T12 14Q15 13 16 8" stroke="#555a66" strokeWidth="1.200" />{pt(6, 5)}</g>],
  ["Snap line midpoints", <g key="i"><path d="M2 16L16 3" stroke="#555" />{pt(4, 14, "#c33")}{pt(9, 9)}{pt(14, 4, "#c33")}</g>],
  ["Snap object centers", <g key="i">{dash("M2 15H15V3")}{pt(8, 9)}</g>],
  ["Snap rotation centers", <g key="i">{dash("M2 15H15V3")}<path d="M3 8H11M7 4V12" stroke="#333" strokeWidth="1.500" /></g>],
  null,
  ["Snap page border", <rect key="i" x="4" y="2" width="10" height="14" fill="url(#paper)" stroke="#333" />],
  ["Snap grids", <path key="i" d="M3 1V17M7 1V17M11 1V17M15 1V17M1 3H17M1 7H17M1 11H17M1 15H17" stroke="#3040f0" strokeWidth="1.500" />],
  ["Snap guides", <path key="i" d="M3 2V16M7 16L12 2M15 2V16" stroke="#4050f0" strokeWidth="1.800" />],
];
const PRESSED = ["Enable snapping", "Snap bounding box", "Snap nodes", "Snap grids", "Snap guides"];

function SideBar({ label, items, height, children }: { label: string; items: BarItem[]; height: string; children?: ReactNode }) {
  return (
    <aside aria-label={label} className="flex min-w-0 flex-1 flex-col items-center border-l border-[#e8ebf5] bg-[#d5dbee] pt-px">
      <div className={`flex ${height} flex-col items-center justify-between`}>
        {items.map((it, i) =>
          it ? (
            <button
              key={it[0]}
              aria-label={it[0]}
              className={`flex h-[16px] w-[16px] shrink-0 items-center justify-center ${PRESSED.includes(it[0]) ? "rounded-[3px] bg-[#bcc3db] outline outline-[#5e647c]" : ""}`}
            >
              <Svg size="size-[13px]">{it[1]}</Svg>
            </button>
          ) : (
            <span key={i} className="flex h-[7px] w-[12px] items-center"><i className="h-[2px] w-full border-b border-white bg-[#b9bfd0]" /></span>
          ),
        )}
      </div>
      {children}
    </aside>
  );
}

/* ---------- palette and status ---------- */

const SWATCHES = (
  "#000000 #1a1a1a #333333 #4d4d4d #666666 #808080 #999999 #b3b3b3 #cccccc #e6e6e6 #ececec #f2f2f2 #f9f9f9 #ffffff " +
  "#800000 #ff0000 #808000 #ffff00 #008000 #00ff00 #008080 #00ffff #000080 #0000ff #800080 #ff00ff " +
  "#2b0000 #550000 #800000 #aa0000 #d40000 #ff0000 #ff2a2a #ff5555 #ff8080 #ffaaaa #ffd5d5 " +
  "#280b0b #501616 #782121 #a02c2c #c83737 #d35f5f #de8787 #e9afaf #f4d7d7 " +
  "#241c1c #483737 #6c5353 #916f6f #ac9393 #c8b7b7 #e3dbdb #2b1100 #552200 #803300 #aa4400"
).split(" ");

function Palette() {
  return (
    <div className="shrink-0 border-t-2 border-[#444] bg-[#efefef]">
      <div className="flex h-[12px]">
        <div className="flex min-w-0 flex-1 pl-px">
          <button aria-label="No fill" className="flex-[2] bg-white">
            <svg viewBox="0 0 12 12" preserveAspectRatio="none" className="h-full w-full"><path d="M0 0L12 12M12 0L0 12" stroke="#801515" strokeWidth="1.500" /><path d="M0 0H12V12H0Z" fill="none" stroke="#222" /></svg>
          </button>
          {SWATCHES.map((c, i) => (
            <button key={i} aria-label={c} className="flex-[2]" style={{ backgroundColor: c }} />
          ))}
          <button aria-label="#d45500" className="flex-1 bg-[#d45500]" />
        </div>
        <button aria-label="Palette menu" className="flex w-[11px] items-center justify-center"><Arrow d="M5 0L1 3L5 6Z" /></button>
      </div>
      <div className="flex h-[13px] items-center pr-[12px] pl-[3px]">
        <Arrow d="M5 0L1 3L5 6Z" />
        <div className="flex h-[10px] min-w-0 flex-1 pl-[4px]">
          <span className="flex flex-[86] items-center justify-center rounded-[2px] border border-[#9a9a9a] bg-linear-to-b from-[#f6f6f6] to-[#cfcfd2]"><Grip /></span>
          <span className="flex-[571]" />
        </div>
        <Arrow d="M1 0L5 3L1 6Z" />
      </div>
    </div>
  );
}

function StatusBar() {
  return (
    <footer className="flex h-[18px] shrink-0 items-center bg-[#efefef] text-[#111]">
      <dl className="grid w-[86px] grid-cols-[48px_1fr] pl-px leading-[9px]">
        <dt>Fill:</dt><dd>N/A</dd>
        <dt>Stroke:</dt><dd>N/A</dd>
      </dl>
      <Field label="O:" value="100" muted width="w-[19px]" />
      <span className="mx-[2px]"><VSep /></span>
      <button aria-label="Toggle layer visibility" className="w-[15px]">
        <Svg size="size-[13px]"><path d="M1 10Q9 2 17 10Q9 17 1 10Z" fill="#ddd" stroke="#333" strokeWidth="1.500" /><circle cx="9" cy="10" r="3" fill="#333" /><path d="M3 6L2 3M7 4L6 1M11 4L12 1M15 6L17 3" stroke="#333" strokeWidth="1.500" /></Svg>
      </button>
      <button aria-label="Lock layer" className="mr-[2px] w-[12px]"><Padlock size="size-[12px]" /></button>
      <Combo label="Current layer" value="(root)" width="w-[43px]" />
      <p className="ml-[4px] min-w-0 flex-1 whitespace-nowrap">No objects selected. Click, Shift+click, or drag around objects to select.</p>
      <div className="flex shrink-0 items-center">
        <VSep />
        <dl className="grid w-[44px] grid-cols-[10px_1fr] pl-px leading-[9px]">
          <dt>X:</dt><dd className="text-right font-['Liberation_Mono',monospace]">-13.78</dd>
          <dt>Y:</dt><dd className="text-right font-['Liberation_Mono',monospace]">44.88</dd>
        </dl>
        <span className="w-[5px]" />
        <Field label="Z:" value="624%" width="w-[30px]" />
        <svg viewBox="0 0 8 8" className="mr-px ml-[5px] size-[8px] self-end" aria-hidden="true">
          <path d="M6 1H7V2H6ZM3 4H4V5H3ZM6 4H7V5H6ZM0 7H1V8H0ZM3 7H4V8H3ZM6 7H7V8H6Z" fill="#aaa" />
        </svg>
      </div>
    </footer>
  );
}

export default function App() {
  return (
    <div className="h-screen min-h-[561px] w-full bg-white font-['Lato','Open_Sans',sans-serif] text-[8px] leading-[10px] font-medium">
      <svg className="absolute size-0" aria-hidden="true">
        <defs>
          <linearGradient id="steel" x2="1" y2="1"><stop stopColor="#f2f8ff" /><stop offset="1" stopColor="#7f9fc0" /></linearGradient>
          <linearGradient id="rose" x2="1" y2="1"><stop stopColor="#fff" /><stop offset="1" stopColor="#f29aa4" /></linearGradient>
          <linearGradient id="leaf" x2="1" y2="1"><stop stopColor="#3fae58" /><stop offset="1" stopColor="#e6f7e6" /></linearGradient>
          <linearGradient id="paper" x2="1" y2="1"><stop stopColor="#fff" /><stop offset="1" stopColor="#bbb" /></linearGradient>
        </defs>
      </svg>
      <div className="flex h-full flex-col overflow-hidden rounded-[7px] border border-[#3c5560] bg-[#8fdff6] px-[5px] pb-[5px]">
        <div className="-mx-[5px] -mb-px"><TitleBar /></div>
        <div className="flex min-h-0 flex-1 flex-col">
          <MenuBar />
          <ToolControls />
          <div className="flex min-h-0 flex-1">
            <Toolbox />
            <CanvasArea />
            <AlignPanel />
            <div className="flex w-[41px] shrink-0">
              <SideBar label="Commands" items={COMMANDS} height="h-[428px]">
                <button aria-label="More commands" className="mt-[3px] text-[11px] leading-[12px] text-[#4a54a0]">»</button>
              </SideBar>
              <SideBar label="Snapping" items={SNAPS} height="h-[324px]" />
            </div>
          </div>
          <Palette />
          <StatusBar />
        </div>
      </div>
    </div>
  );
}
